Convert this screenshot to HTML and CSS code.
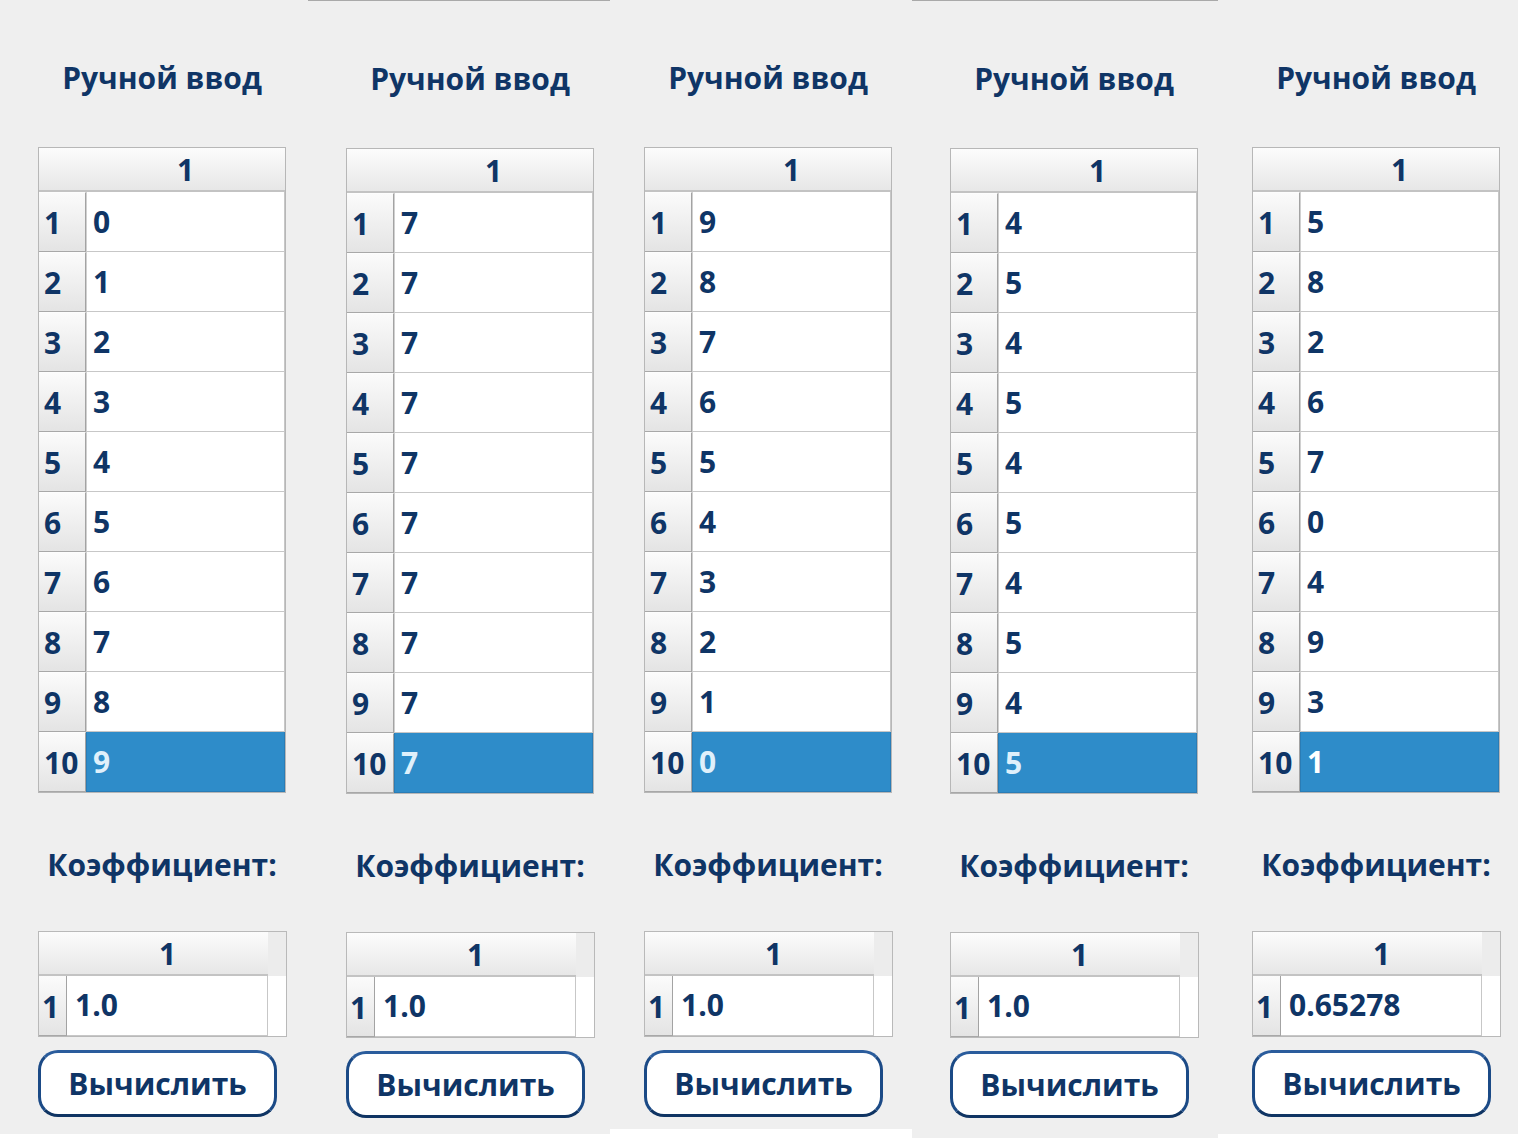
FILE: index.html
```html
<!DOCTYPE html>
<html lang="ru">
<head>
<meta charset="utf-8">
<title>Ручной ввод</title>
<link rel="stylesheet" href="styles.css">
</head>
<body>
<div class="strip">

  <section class="panel p1">
    <h2 class="title">Ручной ввод</h2>
    <div class="tbl">
      <div class="thead"><div class="corner"></div><div class="col">1</div></div>
      <div class="row"><div class="rh">1</div><div class="cell">0</div></div>
      <div class="row"><div class="rh">2</div><div class="cell">1</div></div>
      <div class="row"><div class="rh">3</div><div class="cell">2</div></div>
      <div class="row"><div class="rh">4</div><div class="cell">3</div></div>
      <div class="row"><div class="rh">5</div><div class="cell">4</div></div>
      <div class="row"><div class="rh">6</div><div class="cell">5</div></div>
      <div class="row"><div class="rh">7</div><div class="cell">6</div></div>
      <div class="row"><div class="rh">8</div><div class="cell">7</div></div>
      <div class="row"><div class="rh">9</div><div class="cell">8</div></div>
      <div class="row"><div class="rh">10</div><div class="cell sel">9</div></div>
    </div>
    <h2 class="label">Коэффициент:</h2>
    <div class="ktbl">
      <div class="khead"><div class="kgrad"><div class="kcorner"></div><div class="col">1</div></div><div class="kfill"></div></div>
      <div class="krow"><div class="krh">1</div><div class="kcell">1.0</div><div class="kwhite"></div></div>
    </div>
    <button class="btn">Вычислить</button>
    <div class="foot"></div>
  </section>

  <section class="panel p2 shifted">
    <h2 class="title">Ручной ввод</h2>
    <div class="tbl">
      <div class="thead"><div class="corner"></div><div class="col">1</div></div>
      <div class="row"><div class="rh">1</div><div class="cell">7</div></div>
      <div class="row"><div class="rh">2</div><div class="cell">7</div></div>
      <div class="row"><div class="rh">3</div><div class="cell">7</div></div>
      <div class="row"><div class="rh">4</div><div class="cell">7</div></div>
      <div class="row"><div class="rh">5</div><div class="cell">7</div></div>
      <div class="row"><div class="rh">6</div><div class="cell">7</div></div>
      <div class="row"><div class="rh">7</div><div class="cell">7</div></div>
      <div class="row"><div class="rh">8</div><div class="cell">7</div></div>
      <div class="row"><div class="rh">9</div><div class="cell">7</div></div>
      <div class="row"><div class="rh">10</div><div class="cell sel">7</div></div>
    </div>
    <h2 class="label">Коэффициент:</h2>
    <div class="ktbl">
      <div class="khead"><div class="kgrad"><div class="kcorner"></div><div class="col">1</div></div><div class="kfill"></div></div>
      <div class="krow"><div class="krh">1</div><div class="kcell">1.0</div><div class="kwhite"></div></div>
    </div>
    <button class="btn">Вычислить</button>
    <div class="foot"></div>
  </section>

  <section class="panel p3">
    <h2 class="title">Ручной ввод</h2>
    <div class="tbl">
      <div class="thead"><div class="corner"></div><div class="col">1</div></div>
      <div class="row"><div class="rh">1</div><div class="cell">9</div></div>
      <div class="row"><div class="rh">2</div><div class="cell">8</div></div>
      <div class="row"><div class="rh">3</div><div class="cell">7</div></div>
      <div class="row"><div class="rh">4</div><div class="cell">6</div></div>
      <div class="row"><div class="rh">5</div><div class="cell">5</div></div>
      <div class="row"><div class="rh">6</div><div class="cell">4</div></div>
      <div class="row"><div class="rh">7</div><div class="cell">3</div></div>
      <div class="row"><div class="rh">8</div><div class="cell">2</div></div>
      <div class="row"><div class="rh">9</div><div class="cell">1</div></div>
      <div class="row"><div class="rh">10</div><div class="cell sel">0</div></div>
    </div>
    <h2 class="label">Коэффициент:</h2>
    <div class="ktbl">
      <div class="khead"><div class="kgrad"><div class="kcorner"></div><div class="col">1</div></div><div class="kfill"></div></div>
      <div class="krow"><div class="krh">1</div><div class="kcell">1.0</div><div class="kwhite"></div></div>
    </div>
    <button class="btn">Вычислить</button>
    <div class="foot"></div>
  </section>

  <section class="panel p4 shifted">
    <h2 class="title">Ручной ввод</h2>
    <div class="tbl">
      <div class="thead"><div class="corner"></div><div class="col">1</div></div>
      <div class="row"><div class="rh">1</div><div class="cell">4</div></div>
      <div class="row"><div class="rh">2</div><div class="cell">5</div></div>
      <div class="row"><div class="rh">3</div><div class="cell">4</div></div>
      <div class="row"><div class="rh">4</div><div class="cell">5</div></div>
      <div class="row"><div class="rh">5</div><div class="cell">4</div></div>
      <div class="row"><div class="rh">6</div><div class="cell">5</div></div>
      <div class="row"><div class="rh">7</div><div class="cell">4</div></div>
      <div class="row"><div class="rh">8</div><div class="cell">5</div></div>
      <div class="row"><div class="rh">9</div><div class="cell">4</div></div>
      <div class="row"><div class="rh">10</div><div class="cell sel">5</div></div>
    </div>
    <h2 class="label">Коэффициент:</h2>
    <div class="ktbl">
      <div class="khead"><div class="kgrad"><div class="kcorner"></div><div class="col">1</div></div><div class="kfill"></div></div>
      <div class="krow"><div class="krh">1</div><div class="kcell">1.0</div><div class="kwhite"></div></div>
    </div>
    <button class="btn">Вычислить</button>
    <div class="foot"></div>
  </section>

  <section class="panel p5">
    <h2 class="title">Ручной ввод</h2>
    <div class="tbl">
      <div class="thead"><div class="corner"></div><div class="col">1</div></div>
      <div class="row"><div class="rh">1</div><div class="cell">5</div></div>
      <div class="row"><div class="rh">2</div><div class="cell">8</div></div>
      <div class="row"><div class="rh">3</div><div class="cell">2</div></div>
      <div class="row"><div class="rh">4</div><div class="cell">6</div></div>
      <div class="row"><div class="rh">5</div><div class="cell">7</div></div>
      <div class="row"><div class="rh">6</div><div class="cell">0</div></div>
      <div class="row"><div class="rh">7</div><div class="cell">4</div></div>
      <div class="row"><div class="rh">8</div><div class="cell">9</div></div>
      <div class="row"><div class="rh">9</div><div class="cell">3</div></div>
      <div class="row"><div class="rh">10</div><div class="cell sel white">1</div></div>
    </div>
    <h2 class="label">Коэффициент:</h2>
    <div class="ktbl">
      <div class="khead"><div class="kgrad"><div class="kcorner"></div><div class="col">1</div></div><div class="kfill"></div></div>
      <div class="krow"><div class="krh">1</div><div class="kcell">0.65278</div><div class="kwhite"></div></div>
    </div>
    <button class="btn">Вычислить</button>
    <div class="foot"></div>
  </section>

</div>
</body>
</html>
```

FILE: styles.css
```css
* { box-sizing: border-box; }

html, body {
  margin: 0;
  padding: 0;
  background: #efefef;
}

body {
  font-family: "Open Sans", "Noto Sans", "DejaVu Sans", sans-serif;
  font-weight: 700;
  font-size: 30px;
  color: #0f3566;
}

.strip {
  display: flex;
  height: 1138px;
  overflow: hidden;
}

.panel {
  display: flex;
  flex-direction: column;
  height: 1138px;
  padding-left: 38px;
  padding-top: 57px;
  border-top: 1px solid transparent;
}

.p1 { width: 308px; }
.p2 { width: 302px; }
.p3 { width: 302px; padding-left: 34px; }
.p4 { width: 306px; }
.p5 { width: 300px; padding-left: 34px; }

.shifted {
  border-top-color: #a9a9a9;
  padding-top: 58px;
}

.title,
.label {
  margin: 0;
  width: 248px;
  text-align: center;
  font-size: 30px;
  line-height: 40px;
  font-weight: 700;
  white-space: nowrap;
}

/* main table */
.tbl {
  margin-top: 49px;
  width: 248px;
  border: 1px solid #b7b7b7;
  background: #fff;
}

.thead {
  display: flex;
  height: 44px;
  background: linear-gradient(#fcfcfc, #e7e7e7);
  border-bottom: 2px solid #c3c3c3;
}

.corner { width: 47px; }
.kcorner { width: 28px; }

.col {
  flex: 1;
  text-align: center;
  line-height: 44px;
}

.row {
  display: flex;
  height: 60px;
}

.rh {
  width: 47px;
  padding-left: 5px;
  line-height: 59px;
  background: linear-gradient(#fbfbfb, #e4e4e4);
  border-top: 1px solid #fdfdfd;
  border-right: 1px solid #a3a3a3;
  border-bottom: 1px solid #a8a8a8;
}

.row:first-of-type .rh { border-top: none; }

.cell {
  flex: 1;
  padding-left: 6px;
  line-height: 59px;
  border-left: 1px solid #d0d0d0;
  border-right: 1px solid #c7c7c7;
  border-bottom: 1px solid #c7c7c7;
}

.cell.sel {
  background: #2e8cc9;
  color: #dff0fb;
  border-color: #2a7cb5;
}

.cell.sel.white { color: #ffffff; }

/* coefficient table */
.label { margin-top: 52px; }

.ktbl {
  margin-top: 46px;
  width: 249px;
  border: 1px solid #b9b9b9;
  background: #fff;
}

.khead {
  display: flex;
  height: 44px;
  background: #ececec;
}

.kgrad {
  display: flex;
  width: 229px;
  background: linear-gradient(#fcfcfc, #e7e7e7);
  border-bottom: 2px solid #c3c3c3;
}

.kfill { flex: 1; }

.krow {
  display: flex;
  height: 60px;
}

.krh {
  width: 28px;
  padding-left: 3px;
  line-height: 62px;
  background: linear-gradient(#fbfbfb, #e4e4e4);
  border-right: 1px solid #a3a3a3;
  border-bottom: 1px solid #a8a8a8;
}

.kcell {
  width: 201px;
  padding-left: 8px;
  line-height: 58px;
  border-right: 1px solid #c7c7c7;
  border-bottom: 1px solid #c7c7c7;
}

.kwhite { flex: 1; }

/* button */
.btn {
  margin-top: 13px;
  width: 239px;
  height: 67px;
  border: 3px solid #1b4a86;
  border-top-color: #2a5c9c;
  border-bottom-color: #0f3463;
  border-radius: 20px;
  background: #fff;
  font-family: inherit;
  font-weight: 700;
  font-size: 30px;
  color: #0f3566;
  padding: 0;
  text-align: center;
  line-height: 60px;
}

.foot {
  margin-top: auto;
  margin-left: -38px;
  height: 4px;
  background: #fff;
}

.p3 .foot { margin-left: -34px; height: 9px; }
.p4 .foot { height: 0; }
.p5 .foot { margin-left: -34px; }
```
